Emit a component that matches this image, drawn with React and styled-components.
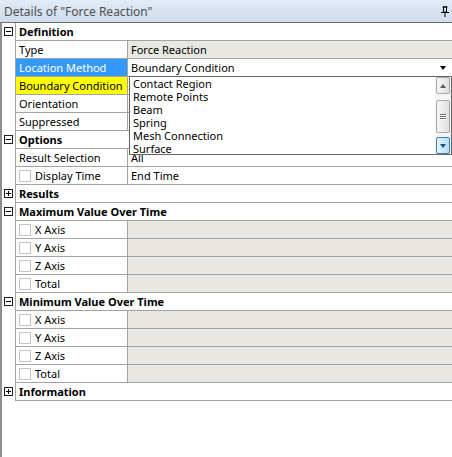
import styled, { createGlobalStyle } from "styled-components"

const GlobalStyle = createGlobalStyle`
    html, body {
        margin: 0;
        padding: 0;
        background: #ffffff;
    }
    body {
        font-family: "Noto Sans", "Open Sans", sans-serif;
        font-size: 11px;
        color: #000;
        overflow: hidden;
    }
`

const Panel = styled.div`
    height: 100vh;
    display: flex;
    flex-direction: column;
`

const TitleBar = styled.div`
    height: 22px;
    flex: none;
    display: flex;
    align-items: center;
    justify-content: space-between;
    padding: 0 3px 0 4px;
    box-sizing: border-box;
    background: linear-gradient(#e2ebf6, #cddbec);
    color: #4f4f4f;
    font-size: 12px;
`

const Body = styled.div`
    position: relative;
    flex: 1;
    border-top: 1px solid #6c6c6c;
    border-left: 2px solid #8e8e8e;
`

const Row = styled.div`
    display: flex;
    height: 18px;
`

const Gutter = styled.div`
    width: 13px;
    flex: none;
    display: flex;
    align-items: flex-start;
    padding-top: 4px;
    box-sizing: border-box;
`

const Expander = styled.div`
    width: 9px;
    height: 9px;
    margin-left: 2px;
    box-sizing: border-box;
    border: 1px solid #1e1e1e;
    position: relative;
    background: #fff;

    &::before, &::after {
        content: '';
        position: absolute;
        background: #000;
    }
    &::before {
        left: 1px;
        right: 1px;
        top: 3px;
        height: 1px;
    }
    &::after {
        display: ${p => (p.open ? "none" : "block")};
        top: 1px;
        bottom: 1px;
        left: 3px;
        width: 1px;
    }
`

const Cells = styled.div`
    flex: 1;
    display: flex;
    border-left: 1px solid #a3a3a3;
    border-bottom: 1px solid #a3a3a3;
    line-height: 17px;
    white-space: nowrap;
`

const HeaderCell = styled.div`
    flex: 1;
    padding-left: 3px;
    font-weight: bold;
`

const toneBg = { selected: "#3399ff", warning: "#ffff00" }

const LabelCell = styled.div`
    width: 112px;
    flex: none;
    display: flex;
    align-items: center;
    gap: 4px;
    padding-left: 3px;
    box-sizing: border-box;
    border-right: 1px solid #a3a3a3;
    background: ${p => toneBg[p.tone] || "transparent"};
    color: ${p => (p.tone === "selected" ? "#fff" : "#000")};
    overflow: hidden;
`

const ValueCell = styled.div`
    flex: 1;
    position: relative;
    padding-left: 3px;
    background: ${p => (p.grey ? "#e8e7e2" : "#fff")};
`

const CheckBox = styled.span`
    width: 12px;
    height: 12px;
    flex: none;
    box-sizing: border-box;
    border: 1px solid #c2c2c2;
    background: #fff;
`

const ComboArrow = styled.span`
    position: absolute;
    right: 6px;
    top: 7px;
    border-left: 3.5px solid transparent;
    border-right: 3.5px solid transparent;
    border-top: 4px solid #000;
`

const DropList = styled.div`
    position: absolute;
    left: 127px;
    right: 0;
    top: 53px;
    height: 79px;
    box-sizing: border-box;
    border: 1px solid #646464;
    background: #fff;
    display: flex;
`

const Options = styled.div`
    flex: 1;
    padding-left: 3px;
`

const Option = styled.div`
    line-height: 13px;
    height: 13px;
    white-space: nowrap;
`

const ScrollBar = styled.div`
    width: 16px;
    flex: none;
    display: flex;
    flex-direction: column;
    padding: 0 1px 0 1px;
    box-sizing: border-box;
    background: #f4f4f4;
`

const ScrollButton = styled.div`
    height: ${p => p.size}px;
    margin-top: ${p => p.offset || 0}px;
    box-sizing: border-box;
    border: 1px solid ${p => (p.hot ? "#3c7fb1" : "#a9a9a9")};
    border-radius: 2px;
    background: ${p => (p.hot
        ? "linear-gradient(90deg, #e4f4fc, #b6ddf4)"
        : "linear-gradient(90deg, #f7f7f7, #dedede)")};
    display: flex;
    flex-direction: column;
    align-items: center;
    justify-content: center;
    gap: 1px;
`

const Arrow = styled.span`
    border-left: 3.5px solid transparent;
    border-right: 3.5px solid transparent;
    ${p => (p.up
        ? "border-bottom: 4px solid #5a5a5a;"
        : "border-top: 4px solid #1f4d74;")}
`

const Grip = styled.span`
    width: 6px;
    height: 1px;
    background: #6e6e6e;
    box-shadow: 0 1px 0 #ffffff;
`

function Pin() {
    return (
        <svg width="8" height="11" viewBox="0 0 8 11">
            <rect x="1.5" y="0.5" width="5" height="1" fill="#000" />
            <rect x="2.5" y="1" width="3" height="5" fill="none" stroke="#000" />
            <rect x="5" y="1" width="1" height="5" fill="#000" />
            <rect x="0" y="6" width="8" height="1" fill="#000" />
            <rect x="3.5" y="7" width="1" height="4" fill="#000" />
        </svg>
    )
}

// values of Orientation / Suppressed sit under the open list, so they stay empty
const rows = [
    { header: "Definition", open: true },
    { label: "Type", value: "Force Reaction", grey: true },
    { label: "Location Method", value: "Boundary Condition", tone: "selected", combo: true },
    { label: "Boundary Condition", tone: "warning" },
    { label: "Orientation" },
    { label: "Suppressed" },
    { header: "Options", open: true },
    { label: "Result Selection", value: "All" },
    { label: "Display Time", check: true, value: "End Time" },
    { header: "Results", open: false },
    { header: "Maximum Value Over Time", open: true },
    { label: "X Axis", check: true, grey: true },
    { label: "Y Axis", check: true, grey: true },
    { label: "Z Axis", check: true, grey: true },
    { label: "Total", check: true, grey: true },
    { header: "Minimum Value Over Time", open: true },
    { label: "X Axis", check: true, grey: true },
    { label: "Y Axis", check: true, grey: true },
    { label: "Z Axis", check: true, grey: true },
    { label: "Total", check: true, grey: true },
    { header: "Information", open: false },
]

const choices = ["Contact Region", "Remote Points", "Beam", "Spring", "Mesh Connection", "Surface"]

export default function App() {
    return (
        <Panel>
            <GlobalStyle />
            <TitleBar>
                <span>Details of "Force Reaction"</span>
                <Pin />
            </TitleBar>
            <Body>
                {rows.map((row, i) => (
                    <Row key={i}>
                        <Gutter>{row.header && <Expander open={row.open} />}</Gutter>
                        <Cells>
                            {row.header ? (
                                <HeaderCell>{row.header}</HeaderCell>
                            ) : (
                                <>
                                    <LabelCell tone={row.tone}>
                                        {row.check && <CheckBox />}
                                        {row.label}
                                    </LabelCell>
                                    <ValueCell grey={row.grey}>
                                        {row.value}
                                        {row.combo && <ComboArrow />}
                                    </ValueCell>
                                </>
                            )}
                        </Cells>
                    </Row>
                ))}
                <DropList>
                    <Options>
                        {choices.map(c => <Option key={c}>{c}</Option>)}
                    </Options>
                    <ScrollBar>
                        <ScrollButton size={17}><Arrow up /></ScrollButton>
                        <ScrollButton size={33} offset={6}>
                            <Grip /><Grip /><Grip />
                        </ScrollButton>
                        <ScrollButton size={17} offset={4} hot><Arrow /></ScrollButton>
                    </ScrollBar>
                </DropList>
            </Body>
        </Panel>
    )
}
